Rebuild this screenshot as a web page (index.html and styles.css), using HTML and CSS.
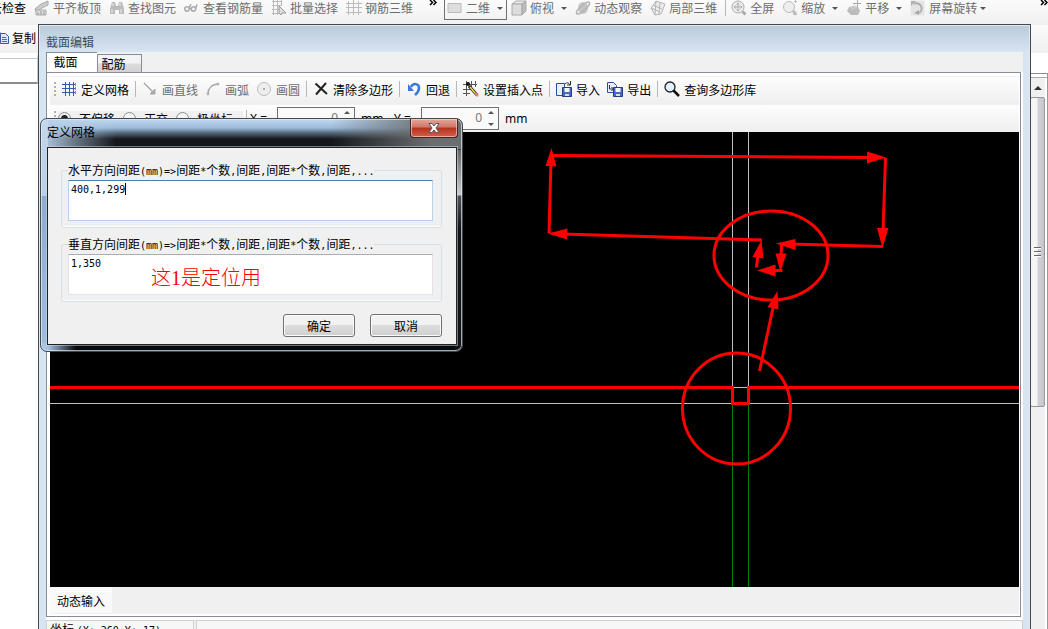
FILE: index.html
```html
<!DOCTYPE html>
<html lang="zh-CN">
<head>
<meta charset="utf-8">
<title>截面编辑</title>
<link rel="stylesheet" href="styles.css">
</head>
<body>
<main class="app">
  <div class="mainbar">
    <button class="tool active first">云检查</button>
    <button class="tool"><svg class="icon" viewBox="0 0 16 16"><path d="M1 9l6-5 7-3v4L8 8 2 12z" fill="#ccc" stroke="#aaa"/><path d="M2 10h10v5H2z" fill="#ddd" stroke="#aaa"/><path d="M4 15v-3M7 15v-4M10 15v-4" stroke="#999"/></svg>平齐板顶</button>
    <button class="tool"><svg class="icon" viewBox="0 0 16 16"><path d="M3 2h3l1 4h2l1-4h3l2 7v5h-5v-4H6v4H1V9z" fill="#bbb"/><path d="M4 3v3M11 3v3M3 9v4M12 9v4" stroke="#eee"/></svg>查找图元</button>
    <button class="tool"><svg class="icon" viewBox="0 0 16 16" fill="none" stroke="#aaa" stroke-width="1.5"><circle cx="3" cy="9" r="2.2"/><circle cx="9.500" cy="9" r="2.200"/><path d="M5 8.500h2M11.500 8.500l1.500-4M5 8l2-4"/></svg>查看钢筋量</button>
    <button class="tool"><svg class="icon" viewBox="0 0 16 16" fill="none" stroke="#bbb"><path d="M1 1.500h9M1 5.500h10M1 9.500h7M1 13.500h7M2.500 0v15M6.500 0v15M10.500 0v5"/><path d="M8 6l7 7h-4l-1 2-2-2z" fill="#ddd" stroke="#999"/></svg>批量选择</button>
    <button class="tool"><svg class="icon" viewBox="0 0 16 16" fill="none" stroke="#bbb"><path d="M0 3.500h16M0 7.500h16M0 12.500h16M2.500 1v14M7.500 0v15M12.500 1v14"/></svg>钢筋三维</button>
    <button class="more spaced" aria-label="更多"><svg class="chevrons" viewBox="0 0 8 6"><path d="M1 0l2.500 2.500L1 5M4.500 0L7 2.500 4.500 5" fill="none" stroke="#000" stroke-width="1.500"/></svg></button>
    <button class="tool boxed"><svg class="icon" viewBox="0 0 16 16"><path d="M1 3.500h13v9H1z" fill="#ddd" stroke="#bbb"/></svg>二维<i class="caret"></i></button>
    <button class="tool"><svg class="icon" viewBox="0 0 16 16" stroke="#aaa"><path d="M1 4l4-3h10l-4 3z" fill="#eee"/><path d="M1 4h10v11H1z" fill="#ddd"/><path d="M11 4l4-3v10l-4 4z" fill="#bbb"/></svg>俯视<i class="caret"></i></button>
    <button class="tool"><svg class="icon" viewBox="0 0 16 16"><ellipse cx="8" cy="8" rx="5" ry="6" fill="#c4c4c4"/><ellipse cx="8" cy="8" rx="8.500" ry="2.500" transform="rotate(-42 8 8)" fill="none" stroke="#b5b5b5" stroke-width="1.500"/></svg>动态观察</button>
    <button class="tool"><svg class="icon" viewBox="0 0 16 16" fill="#eee" stroke="#b5b5b5"><path d="M1 8l5-7 9 3-4 10-6 1z"/><path d="M3 5l9 4M1 8l9 4M6 1l-1 14M10 2L9 14" fill="none"/></svg>局部三维</button>
    <span class="sep"></span>
    <button class="tool pull"><svg class="icon" viewBox="0 0 16 16" fill="none" stroke="#aaa"><circle cx="7" cy="7" r="6" fill="#eee"/><path d="M3 7h8M7 3v8M5.500 4.500L7 3l1.500 1.500M5.500 9.500L7 11l1.500-1.500M4.500 5.500L3 7l1.500 1.500M9.500 5.500L11 7 9.500 8.500"/><path d="M11.500 11.500l3 3" stroke-width="3"/></svg>全屏</button>
    <button class="tool"><svg class="icon" viewBox="0 0 16 16" fill="none" stroke="#bbb"><circle cx="7" cy="7" r="5.500" fill="#eee"/><path d="M11 11l3 3" stroke-width="3"/><path d="M12 1.500h3M13.500 0v3M11 14.500h4"/></svg>缩放<i class="caret"></i></button>
    <button class="tool"><svg class="icon" viewBox="0 0 16 16"><path d="M3 7l5-1 4 1 2 4-2 4H5l-4-4z" fill="#bbb"/><path d="M8 4l1 5M5 6l2 4" stroke="#ddd"/><path d="M7 3.500h8M11.500 0v7" stroke="#aaa"/></svg>平移<i class="caret"></i></button>
    <button class="tool last"><svg class="icon" viewBox="0 0 16 16" fill="none"><path d="M.5.500h14v15H.5z" fill="#e4e4e4"/><path d="M4 4a5 5 0 1 1 5 9" stroke="#b0b0b0" stroke-width="2"/><path d="M9 10v5l-5-2z" fill="#aaa"/><path d="M1 1h5L1 6z" fill="#b0b0b0"/></svg>屏幕旋转<i class="caret"></i></button>
    <button class="more end" aria-label="更多"><svg class="chevrons" viewBox="0 0 8 6"><path d="M1 0l2.500 2.500L1 5M4.500 0L7 2.500 4.500 5" fill="none" stroke="#000" stroke-width="1.500"/></svg></button>
  </div>
  <div class="subbar">
    <button class="tool active copy"><svg class="icon" viewBox="0 0 16 16"><path d="M1 2h6v9H1z" fill="#fff" stroke="#46a"/><path d="M7.500 3.500h5l3 3v7h-8z" fill="#dbe8fb" stroke="#3558a8"/><path d="M9 7.500h4M9 9.500h5M9 11.500h5" stroke="#3f6bc4"/></svg>复制</button>
  </div>
  <div class="workspace">
    <input class="side-input" aria-label="名称">
    <div class="scrollbar"><span class="scroll-up"></span><span class="thumb"></span></div>
  </div>
</main>

<section class="window">
  <h1 class="window-title">截面编辑</h1>
  <div class="client">
    <div class="tabs" role="tablist">
      <button class="tab selected" role="tab">截面</button>
      <button class="tab" role="tab">配筋</button>
    </div>
    <div class="panel">
      <div class="toolbar">
        <span class="grip"></span>
        <button class="cmd"><svg class="icon" viewBox="0 0 16 16" stroke="#2d5bb8"><path d="M1 3.500h14M1 7.500h14M1 11.500h14M4.500 1v14M8.500 1v14M12.500 1v14"/><path d="M14.500 2v3M14.500 6v3M14.500 10v3" stroke="#6b8fd6"/></svg>定义网格</button>
        <span class="sep"></span>
        <button class="cmd off"><svg class="icon" viewBox="0 0 16 16" fill="none" stroke="#aaa"><path d="M2 2l10 10" stroke-width="1.500"/><path d="M13 8v5H8z" fill="#aaa"/></svg>画直线</button>
        <button class="cmd off"><svg class="icon" viewBox="0 0 16 16" fill="none" stroke="#aaa"><path d="M3 13Q3 4 13 3" stroke-width="1.500"/><circle cx="3" cy="13" r="1"/><circle cx="13" cy="3" r="1"/></svg>画弧</button>
        <button class="cmd off"><svg class="icon" viewBox="0 0 16 16"><circle cx="8" cy="8" r="6.500" fill="#eee" stroke="#bbb"/><circle cx="8" cy="8" r="1" fill="#999"/></svg>画圆</button>
        <span class="sep"></span>
        <button class="cmd"><svg class="icon" viewBox="0 0 16 16"><path d="M2.500 2.500L14 13M13 2L3 13.500" stroke="#222" stroke-width="2"/></svg>清除多边形</button>
        <span class="sep"></span>
        <button class="cmd"><svg class="icon" viewBox="0 0 16 16"><path d="M5 6C7 2 13 2 13 7c0 4-3 6-4 7" fill="none" stroke="#3978d8" stroke-width="2.500"/><path d="M2 3v7h6z" fill="#3978d8"/></svg>回退</button>
        <span class="sep"></span>
        <button class="cmd"><svg class="icon" viewBox="0 0 16 16"><path d="M0 3.500h14M0 8.500h9M0 12.500h7M3.500 0v15M8.500 0v8M12.500 0v6" stroke="#555"/><circle cx="5" cy="3" r="2" fill="#111"/><path d="M6 5l8 9" stroke="#222" stroke-width="3"/><path d="M7 6l5 6" stroke="#f5d848" stroke-width="1.500"/><path d="M12 12l3 3" stroke="#e08070" stroke-width="2.500"/></svg>设置插入点</button>
        <span class="sep"></span>
        <button class="cmd"><svg class="icon" viewBox="0 0 16 16"><path d="M.5 2.500h8v12h-8z" fill="#e8eefb" stroke="#2b4fa0"/><path d="M6.500 6.500h9v9h-9z" fill="#4b68c0" stroke="#263d80"/><path d="M8.500 7h5v4h-5z" fill="#f5f7ff"/><path d="M9 13h4v2H9z" fill="#ddd"/><path d="M9 3q3-3 5 1M14.500 0v4H11" fill="none" stroke="#333"/></svg>导入</button>
        <button class="cmd"><svg class="icon" viewBox="0 0 16 16"><path d="M.5 1.500h6l3 3v7h-9z" fill="#e8eefb" stroke="#2b4fa0"/><path d="M6.500 6.500h9v9h-9z" fill="#4b68c0" stroke="#263d80"/><path d="M8.500 7h5v4h-5z" fill="#f5f7ff"/><path d="M9 13h4v2H9z" fill="#ddd"/><path d="M2.500 4v4H6M4.500 6l2 2-2 2" fill="none" stroke="#333"/></svg>导出</button>
        <span class="sep"></span>
        <button class="cmd"><svg class="icon" viewBox="0 0 16 16"><circle cx="6" cy="6" r="5" fill="#e4f4fc" stroke="#222" stroke-width="1.300"/><path d="M9.500 9.500l5.500 5.500" stroke="#111" stroke-width="2.500"/></svg>查询多边形库</button>
      </div>
      <div class="toolbar options">
        <span class="grip"></span>
        <div class="radios">
          <label class="radio"><input type="radio" name="offset" checked>不偏移</label>
          <label class="radio"><input type="radio" name="offset">正交</label>
          <label class="radio"><input type="radio" name="offset">极坐标</label>
        </div>
        <span class="sep"></span>
        <label class="axis" for="x-value">X =</label>
        <span class="spin"><input id="x-value" value="0"><span class="arrows"><i class="up"></i><i class="down"></i></span></span>
        <span class="unit">mm</span>
        <label class="axis" for="y-value">Y =</label>
        <span class="spin"><input id="y-value" value="0"><span class="arrows"><i class="up"></i><i class="down"></i></span></span>
        <span class="unit">mm</span>
      </div>
      <div class="canvas">
        <svg class="drawing" viewBox="50 132 969 455" preserveAspectRatio="xMidYMid slice">
          <path d="M732.500 132v272M748.500 132v272M50 403.500h969M732 387.500h16" stroke="#c0c0c0"/>
          <path d="M732.500 404v183M748.500 404v183" stroke="#008000"/>
          <g fill="none" stroke="#f00" stroke-width="3">
            <path d="M50 387.500h682.500v16h16v-16H1019"/>
            <ellipse cx="771" cy="255.500" rx="57" ry="44.500"/>
            <ellipse cx="736.500" cy="408.500" rx="54" ry="55.500"/>
            <path d="M549 233L551 160M552 155.500L870 157.500M885.500 158L883 232M882.500 246.500L790 244M781.500 245L781 258M782.500 270.500H772M756.500 267.500L758 254M762 240L562 234M759.500 371L774 303"/>
          </g>
          <path fill="#f00" d="M551.500 148l5 18.500-11-.5zM886 157.500L867 163.500V151.500zM882.500 248L877 228h11.500zM776 243.500L795.500 239v11zM780.500 272L775.500 253.500h11zM757 270.500L775.500 264.500v12zM761.500 240L752.500 257l11 1.500zM548 233.500L567.500 228.500l-.5 11zM777.500 291L767.500 307l11 2.500z"/>
        </svg>
      </div>
      <div class="footer"><button class="dynamic">动态输入</button></div>
    </div>
    <div class="status">
      <span class="cell coords">坐标 <span class="half">(X: 260 Y: 17)</span></span>
      <span class="cell rest"></span>
    </div>
  </div>
</section>

<form class="dialog">
  <div class="dialog-head">
    <h2 class="dialog-title">定义网格</h2>
    <button type="button" class="close" aria-label="关闭"><svg class="cross" viewBox="0 0 12 10"><path d="M1 .5h3l2 2.500L8 .5h3L8 5l3 4.500H8L6 7 4 9.500H1L4 5z" fill="#fff" stroke="#555b6b"/></svg></button>
  </div>
  <div class="dialog-body">
    <fieldset class="group">
      <legend><label for="h-grid">水平方向间距<span class="half">(mm)=&gt;</span>间距<span class="half">*</span>个数<span class="half">,</span>间距<span class="half">,</span>间距<span class="half">*</span>个数<span class="half">,</span>间距<span class="half">,...</span></label></legend>
      <textarea id="h-grid" class="field focused">400,1,299</textarea>
    </fieldset>
    <fieldset class="group">
      <legend><label for="v-grid">垂直方向间距<span class="half">(mm)=&gt;</span>间距<span class="half">*</span>个数<span class="half">,</span>间距<span class="half">,</span>间距<span class="half">*</span>个数<span class="half">,</span>间距<span class="half">,...</span></label></legend>
      <textarea id="v-grid" class="field">1,350</textarea>
      <span class="note">这1是定位用</span>
    </fieldset>
    <div class="actions">
      <button type="button" class="action">确定</button>
      <button type="button" class="action">取消</button>
    </div>
  </div>
</form>
</body>
</html>
```
FILE: styles.css
```css
* { box-sizing: border-box; }
body {
  margin: 0;
  height: 100vh;
  overflow: hidden;
  position: relative;
  background: #fff;
  color: #000;
  font: 12px/17px "Noto Sans CJK SC", sans-serif;
}
button, input, textarea { font: inherit; color: inherit; margin: 0; }
button { border: 0; padding: 0; background: none; white-space: nowrap; }
h1, h2 { margin: 0; font-size: 12px; font-weight: normal; }
.icon { width: 16px; height: 16px; flex: none; }
.sep { width: 1px; height: 16px; background: #b8b8b8; flex: none; }
.half { font: 10px/12px "DejaVu Sans Mono", monospace; }

/* application behind the windows */
.app { height: 100%; display: flex; flex-direction: column; }
.mainbar {
  display: flex;
  align-items: flex-start;
  gap: 8px;
  height: 25px;
  background: linear-gradient(#fbfbfb, #f0f0f0);
}
.tool { display: flex; align-items: center; gap: 3px; color: #6d6d6d; flex: none; line-height: 16px; }
.tool.active { color: #000; }
.first { margin-left: -10px; }
.caret {
  border: 3px solid transparent;
  border-top-color: #555;
  border-bottom: 0;
  margin-left: 4px;
}
.last .caret { margin-left: 0; }
.boxed {
  height: 20px;
  padding: 0 3px 3px 2px;
  border: 1px solid #707070;
  border-top: 0;
  margin-right: -4px;
}
.pull { margin-left: -3px; }
.more { height: 6px; display: flex; }
.chevrons { width: 8px; height: 6px; }
.spaced { margin-left: 8px; margin-right: -1px; }
.end { margin-left: auto; }
.subbar {
  height: 28px;
  padding-top: 5px;
  background: linear-gradient(#fafafa, #f0f0f0);
}
.copy { margin-left: -7px; }
.workspace { flex: 1; display: flex; justify-content: space-between; align-items: flex-start; }
.side-input {
  width: 38px;
  height: 31px;
  margin-top: 0;
  border: 1px solid #c5c9d0;
  border-top: 5px solid #fff;
  border-left: 0;
  border-bottom: 2px solid #8b8b90;
  box-shadow: inset 0 1px #c5c9d0;
}
.scrollbar {
  align-self: stretch;
  width: 18px;
  margin-top: 20px;
  border-top: 1px solid #8b8b95;
  border-right: 1px solid #999;
  box-shadow: inset 0 3px #fff, inset 0 4px #aaa, inset -2px 0 #fff;
  background: #f0f0f0;
  display: flex;
  flex-direction: column;
  align-items: flex-start;
}
.scroll-up {
  margin: 12px 0 7px 4px;
  border: 4px solid transparent;
  border-bottom-color: #333;
  border-top: 0;
}
.thumb {
  width: 15px;
  height: 310px;
  border: 1px solid #989898;
  border-radius: 2px;
  background:
    repeating-linear-gradient(#666 0 1px, #fff 1px 2px, transparent 2px 4px) 3px 149px / 7px 10px no-repeat,
    linear-gradient(90deg, #f5f5f5 45%, #d2d2d6 55%, #c5c5ca);
}

/* section editor */
.window {
  position: absolute;
  left: 38px;
  top: 24px;
  right: 17px;
  bottom: -16px;
  border: 1px solid #45484d;
  background: linear-gradient(#b9cad9, #d7e4f2 27px);
  box-shadow: inset 0 0 0 1px #dce8f4;
  padding: 0 7px 7px;
  display: flex;
  flex-direction: column;
}
.window-title { height: 27px; line-height: 33px; color: #3d4c5c; }
.client { flex: 1; display: flex; flex-direction: column; background: #fff; min-height: 0; }
.tabs { height: 20px; display: flex; align-items: flex-end; background: #f0f0f0; }
.tab {
  width: 45px;
  height: 18px;
  padding-right: 12px;
  border: 1px solid #898c95;
  border-bottom: 0;
  background: linear-gradient(#f3f3f3 45%, #dcdcdc 55%, #d2d2d2);
}
.tab.selected { width: 51px; height: 20px; padding: 0 13px 2px 0; border-right: 0; background: #fff; }
.panel {
  flex: 1;
  display: flex;
  flex-direction: column;
  min-height: 0;
  margin-right: 2px;
  padding: 3px 1px 2px 3px;
  border: 1px solid #898c95;
}
.toolbar {
  height: 28px;
  flex: none;
  display: flex;
  align-items: center;
  gap: 6px;
  padding: 0 0 3px 4px;
  border-top: 1px solid #f0f0f0;
  background: linear-gradient(#fdfdfd, #efefef);
}
.grip { width: 2px; height: 14px; margin-right: -1px; background: repeating-linear-gradient(#b0b0b0 0 2px, transparent 2px 4px); }
.cmd { display: flex; align-items: center; gap: 4px; }
.cmd + .cmd { margin-left: 1px; }
.off { color: #6d6d6d; }
.options { gap: 3px; padding-bottom: 1px; }
.radios { display: flex; align-items: center; gap: 8px; width: 185px; padding-top: 0; background: #f0f0f0; line-height: 15px; }
.radio { display: flex; align-items: center; gap: 8px; }
.radio input {
  appearance: none;
  width: 13px;
  height: 13px;
  border: 1px solid #8e8f8f;
  border-radius: 50%;
  background: #f6f6f6;
}
.radio input:checked { background: radial-gradient(#222 0 3px, #eee 4px); }
.axis, .unit { font: 12px/17px "Noto Sans", sans-serif; }
.axis { width: 24px; }
.spin { width: 78px; height: 23px; display: flex; border: 1px solid #707070; background: #fafafa; }
.spin input { flex: 1; min-width: 0; border: 0; padding: 0 2px 2px; text-align: right; color: #777; background: none; font: 12px/17px "Noto Sans", sans-serif; }
.arrows { width: 14px; display: flex; flex-direction: column; justify-content: space-between; align-items: center; padding: 3px; }
.up, .down { border: 3px solid transparent; }
.up { border-top: 0; border-bottom-color: #555; }
.down { border-bottom: 0; border-top-color: #555; }
.unit { width: 28px; padding-left: 3px; margin-right: 5px; }
.canvas { flex: 1; min-height: 0; display: flex; background: #000; }
.drawing { width: 100%; height: 100%; }
.footer { height: 27px; flex: none; background: #f0f0f0; }
.dynamic { height: 26px; padding: 0 7px; background: #f9f9f9; }
.status { height: 17px; flex: none; display: flex; gap: 2px; margin-top: 3px; background: #f0f0f0; }
.cell { border: 1px solid #d0d0d0; background: #f7f7f7; }
.coords { width: 148px; padding-left: 3px; line-height: 16px; white-space: nowrap; }
.rest { flex: 1; }

/* grid dialog */
.dialog {
  position: absolute;
  left: 40px;
  top: 118px;
  width: 423px;
  padding: 0 5px 6px 6px;
  border: 1px solid #44474c;
  border-radius: 7px;
  background:
    linear-gradient(90deg, #a5c3e2 0 7px, transparent 35px) 0 100% / 100% 8px no-repeat,
    linear-gradient(#c2d8ee, #b7cfe8 77px, #8eaccd 77px, #9fbddd) 0 0 / 7px 100% no-repeat,
    linear-gradient(transparent 30px, #666 31px, #ccc 76px, #50545a 77px, #12151a 110px) 100% 0 / 7px 100% no-repeat,
    linear-gradient(90deg, #b8d0e9, rgba(184, 208, 233, .5) 35px, transparent 75px) 0 0 / 100% 30px no-repeat,
    linear-gradient(90deg, transparent 290px, #6b6e70 390px) 0 0 / 100% 30px no-repeat,
    linear-gradient(#c3daf2, #9bbad9 9px, #536879 14px, #14171a 20px, #080a0c);
  box-shadow: inset 0 0 0 1px rgba(225, 235, 245, .7);
}
.dialog-head { display: flex; justify-content: space-between; height: 28px; }
.dialog-title { line-height: 26px; }
.close {
  width: 48px;
  height: 19px;
  margin-right: -1px;
  border: 1px solid #4c2020;
  border-top: 0;
  border-radius: 0 0 4px 4px;
  background: linear-gradient(#e4a99c, #cf7566 45%, #b5321c 50%, #d26049);
  box-shadow: inset 0 0 0 1px rgba(255, 220, 210, .6);
  display: flex;
  align-items: center;
  justify-content: center;
}
.cross { width: 12px; height: 10px; }
.dialog-body {
  border: 1px solid #222;
  background: #f0f0f0;
  padding: 13px 14px 7px 13px;
  display: flex;
  flex-direction: column;
  gap: 7px;
  box-shadow: 0 0 0 1px rgba(210, 220, 230, .5);
}
.group {
  position: relative;
  min-width: 0;
  margin: 0;
  padding: 1px 8px 6px 6px;
  border: 1px solid #d5dfe5;
  border-radius: 3px;
  box-shadow: inset 0 -1px #fff;
}
.group legend { padding: 0; line-height: 17px; height: 18px; white-space: nowrap; }
.field {
  display: block;
  width: 100%;
  height: 41px;
  padding: 2px;
  resize: none;
  overflow: hidden;
  border: 1px solid #e2e3ea;
  border-top-color: #abadb3;
  background: #fff;
  outline: 0;
  font: 10px/13px "DejaVu Sans Mono", monospace;
}
.focused {
  border-color: #b5d3ec;
  border-top-color: #4a7fb0;
  background: linear-gradient(#000, #000) 56px 2px / 1px 12px no-repeat #fff;
}
.note {
  position: absolute;
  left: 89px;
  top: 13px;
  color: #f00;
  font: 20px/24px "Liberation Serif", "Noto Sans CJK SC", serif;
  font-weight: 300;
}
.actions { display: flex; justify-content: flex-end; gap: 15px; margin-top: 5px; }
.action {
  width: 72px;
  height: 23px;
  border: 1px solid #707070;
  border-radius: 3px;
  background: linear-gradient(#f2f2f2 45%, #dddddd 50%, #cfcfcf);
  box-shadow: inset 0 0 0 1px #fbfbfb;
}
```
